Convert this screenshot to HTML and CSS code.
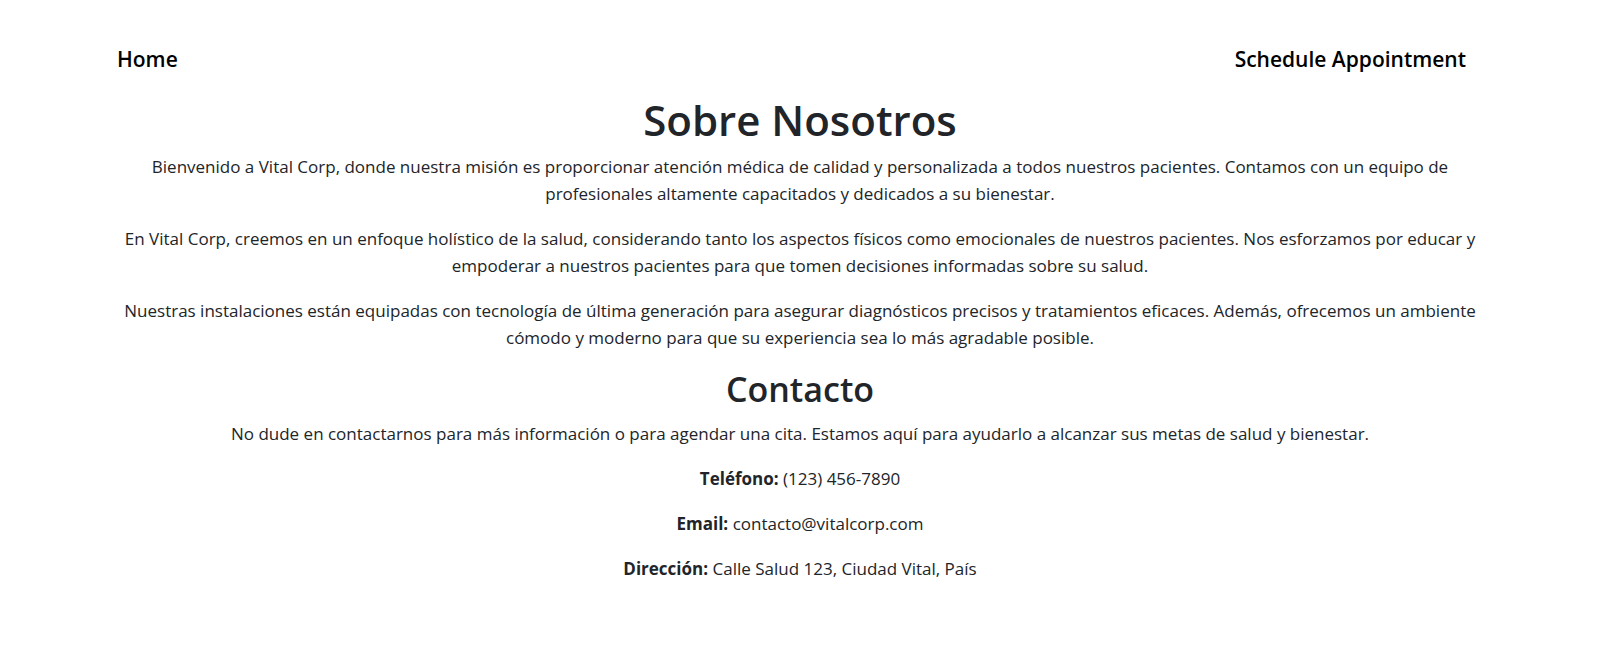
FILE: index.html
```html
<!DOCTYPE html>
<html lang="es">
<head>
<meta charset="utf-8">
<title>Vital Corp - Sobre Nosotros</title>
<link rel="stylesheet" href="styles.css">
</head>
<body>
<nav class="topnav">
  <a class="nav-link" href="#">Home</a>
  <a class="nav-link" href="#">Schedule Appointment</a>
</nav>
<main class="content">
  <section class="about">
    <h1 class="title">Sobre Nosotros</h1>
    <p class="text">Bienvenido a Vital Corp, donde nuestra misión es proporcionar atención médica de calidad y personalizada a todos nuestros pacientes. Contamos con un equipo de profesionales altamente capacitados y dedicados a su bienestar.</p>
    <p class="text">En Vital Corp, creemos en un enfoque holístico de la salud, considerando tanto los aspectos físicos como emocionales de nuestros pacientes. Nos esforzamos por educar y empoderar a nuestros pacientes para que tomen decisiones informadas sobre su salud.</p>
    <p class="text">Nuestras instalaciones están equipadas con tecnología de última generación para asegurar diagnósticos precisos y tratamientos eficaces. Además, ofrecemos un ambiente cómodo y moderno para que su experiencia sea lo más agradable posible.</p>
  </section>
  <section class="contact">
    <h2 class="subtitle">Contacto</h2>
    <p class="text">No dude en contactarnos para más información o para agendar una cita. Estamos aquí para ayudarlo a alcanzar sus metas de salud y bienestar.</p>
    <p class="text"><strong>Teléfono:</strong> (123) 456-7890</p>
    <p class="text"><strong>Email:</strong> contacto@vitalcorp.com</p>
    <p class="text"><strong>Dirección:</strong> Calle Salud 123, Ciudad Vital, País</p>
  </section>
</main>
</body>
</html>
```
FILE: styles.css
```css
html, body {
  margin: 0;
  padding: 0;
  background: #fff;
}
body {
  font-family: "Open Sans", "Noto Sans", sans-serif;
  font-size: 17px;
  line-height: 27px;
  color: #212529;
}
.topnav {
  display: flex;
  justify-content: space-between;
  align-items: center;
  padding: 44px 134px 0 117px;
}
.nav-link {
  color: #000;
  text-decoration: none;
  font-size: 21px;
  font-weight: 600;
  line-height: 31.5px;
}
.content {
  width: 1376px;
  margin: 0 auto;
  text-align: center;
  padding-top: 19px;
}
.title {
  margin: 0 0 8px;
  font-size: 42px;
  font-weight: 600;
  line-height: 1.2;
}
.subtitle {
  margin: 4px 0 10px;
  font-size: 34px;
  font-weight: 600;
  line-height: 1.2;
}
.text {
  margin: 0 0 18px;
}
.text strong {
  font-weight: 700;
}
```
